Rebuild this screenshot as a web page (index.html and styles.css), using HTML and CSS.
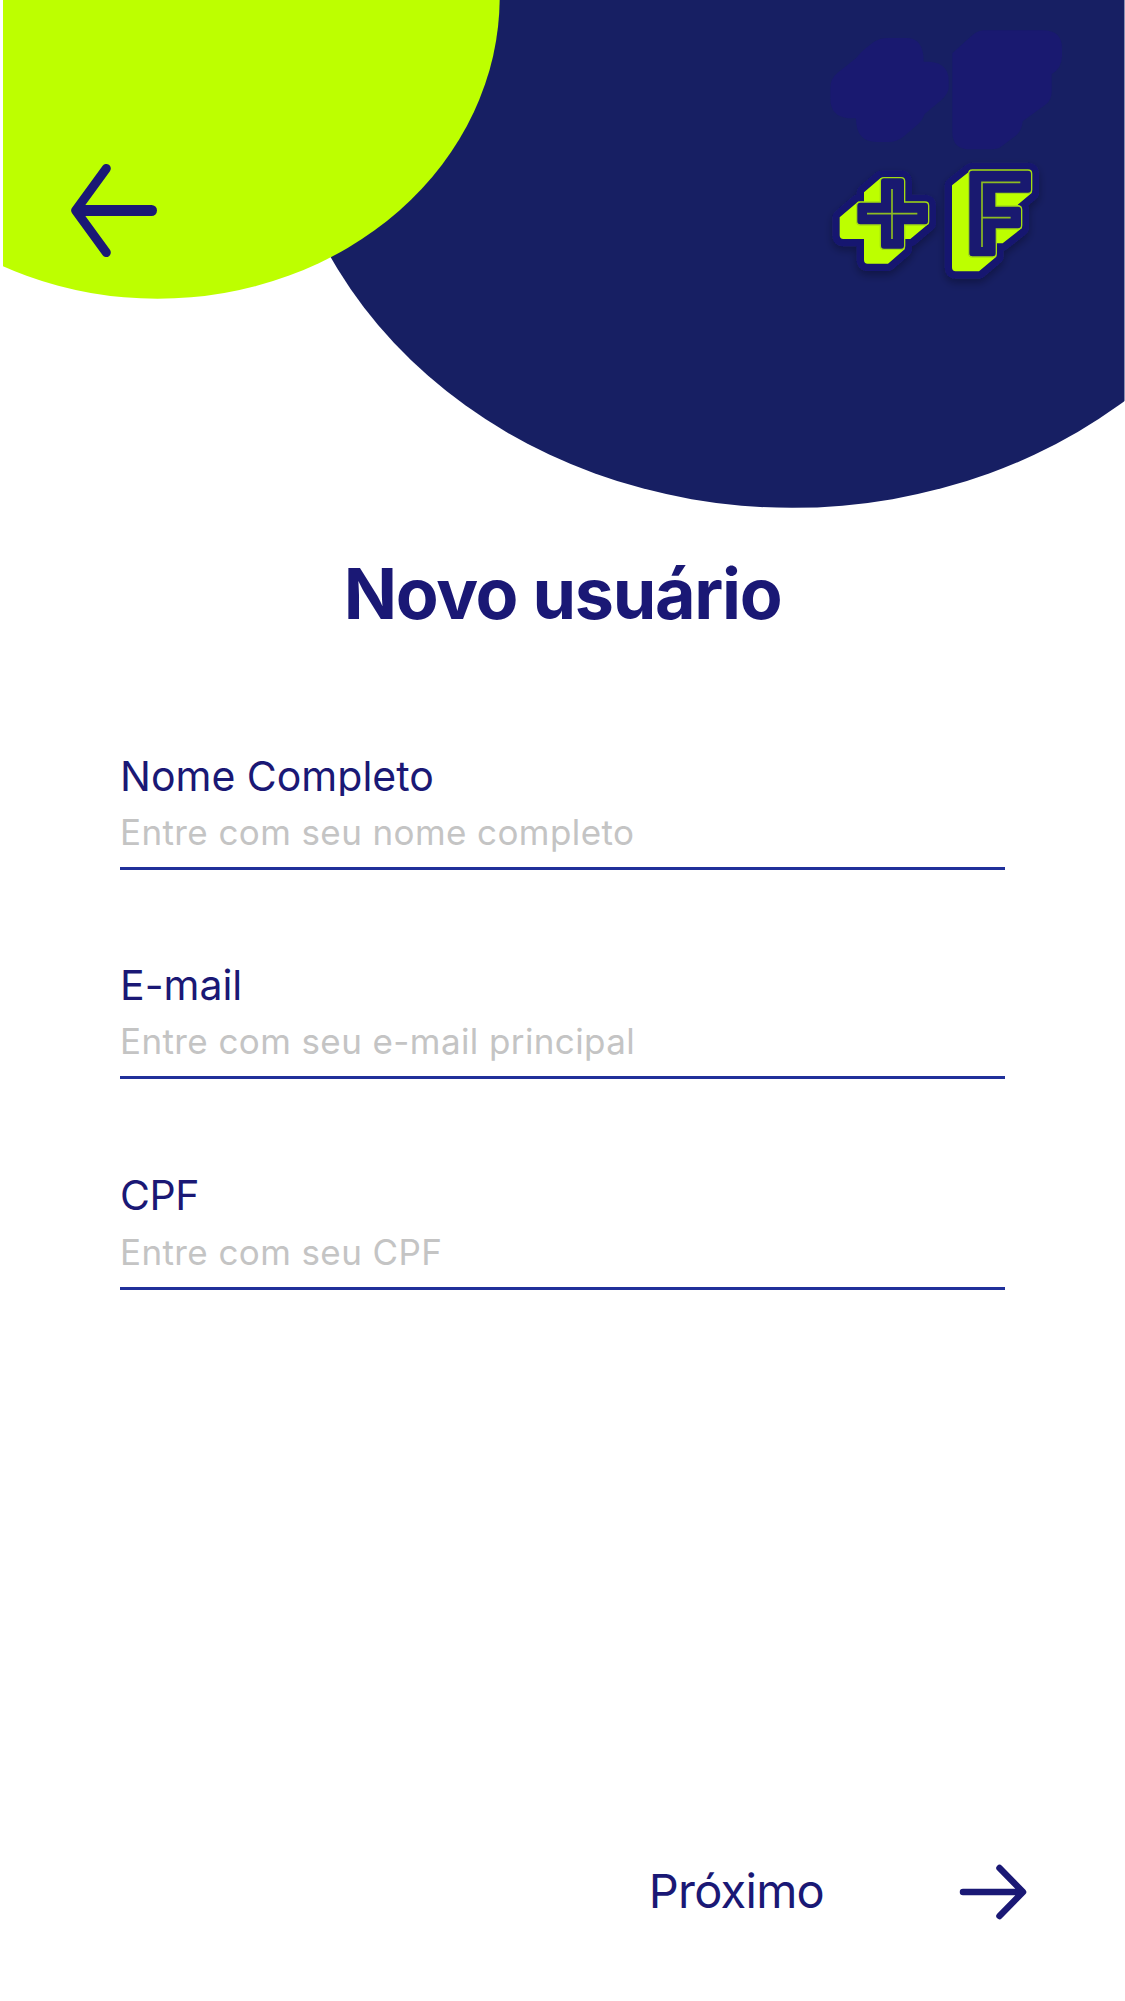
FILE: index.html
```html
<!DOCTYPE html>
<html lang="pt-BR">
<head>
<meta charset="utf-8">
<title>Novo usuário</title>
<link rel="stylesheet" href="styles.css">
</head>
<body>
<main class="screen">
  <header class="hero">
    <svg class="hero-shapes" width="1125" height="510" viewBox="0 0 1125 510" aria-hidden="true">
      <svg x="3" y="0" width="1121.5" height="510" viewBox="3 0 1121.5 510">
        <ellipse cx="792" cy="56.5" rx="515" ry="451.3" fill="#171f63"/>
        <ellipse cx="157.5" cy="-3" rx="342.2" ry="301.8" fill="#bdff00"/>
      </svg>
    </svg>
    <button class="back" aria-label="Voltar">
      <svg width="88" height="94" viewBox="0 0 88 94">
        <path d="M35.300 5.500 4.700 47.500 35.300 89.500"/>
        <path class="shaft" d="M8 47.500H80.500"/>
      </svg>
    </button>
    <svg class="logo" width="325" height="300" viewBox="0 0 975 900" aria-label="+F">
      <defs>
        <filter id="shadow" x="-20%" y="-20%" width="140%" height="140%">
          <feDropShadow dx="0" dy="12" stdDeviation="12" flood-color="#000" flood-opacity=".3"/>
        </filter>
        <path id="plus-body" d="M242 534 192 577V605H174L119 652V706Q119 717 130 717H192V780Q192 791 203 791H264L314 748V717H331L386 671V617Q386 606 375 606H314V545Q314 533 303 533H252Z"/>
        <path id="f-body" d="M510 513 456 556V802Q456 814 467 814H537L589 770V730H608L665 685V630Q665 618 653 614L695 579V521Q695 510 684 510H517Z"/>
      </defs>
      <g fill="#191970">
        <path d="M265 114H320Q371 114 371 185H390Q446 190 446 242V265Q444 282 424 300L374 342Q368 360 354 373L310 410Q290 426 265 426H230Q168 426 168 355H145Q91 350 91 295V265Q91 236 112 219L168 175Q180 158 198 144L220 127Q238 114 265 114Z"/>
        <path d="M550 91H728Q786 91 786 145V170Q784 207 755 222V275Q755 298 738 313L668 364Q666 390 650 405L606 438Q594 448 575 448H510Q457 448 457 395V160L510 112Q532 91 550 91Z"/>
      </g>
      <g filter="url(#shadow)" fill="#191970" stroke="#191970" stroke-width="44" stroke-linejoin="round">
        <use href="#plus-body"/>
        <use href="#f-body"/>
      </g>
      <g fill="#bdff00">
        <use href="#plus-body"/>
        <use href="#f-body"/>
      </g>
      <g fill="#191970" stroke="#a3dc12" stroke-width="4">
        <path d="M252 533H303Q314 533 314 544V606H375Q386 606 386 617V664Q386 675 375 675H314V737Q314 748 303 748H252Q241 748 241 737V675H181Q170 675 170 664V617Q170 606 181 606H241V544Q241 533 252 533Z"/>
        <path d="M517 510H684Q695 510 695 521V569Q695 580 684 580H588V618H654Q665 618 665 629V676Q665 687 654 687H589V760Q589 771 578 771H517Q506 771 506 760V521Q506 510 517 510Z"/>
      </g>
      <g fill="none" stroke="#8dbb22" stroke-width="5">
        <path d="M276 567V717M201 641H352M546 741V547H661M546 653H632"/>
      </g>
    </svg>
  </header>

  <h1 class="title">Novo usuário</h1>

  <form class="form">
    <div class="field">
      <label class="label" for="name">Nome Completo</label>
      <input class="input" id="name" type="text" placeholder="Entre com seu nome completo">
    </div>
    <div class="field">
      <label class="label" for="email">E-mail</label>
      <input class="input" id="email" type="text" placeholder="Entre com seu e-mail principal">
    </div>
    <div class="field field-cpf">
      <label class="label" for="cpf">CPF</label>
      <input class="input" id="cpf" type="text" placeholder="Entre com seu CPF">
    </div>
  </form>

  <footer class="footer">
    <button class="next">
      <span class="next-text">Próximo</span>
      <svg class="next-icon" width="68" height="56" viewBox="0 0 68 56" aria-hidden="true">
        <path d="M4 28H63M40.500 4 64 28 40.500 52"/>
      </svg>
    </button>
  </footer>
</main>
</body>
</html>
```
FILE: styles.css
```css
* {
  box-sizing: border-box;
}

body {
  margin: 0;
  background: #fff;
  color: #1a1875;
  font-family: Inter, "Liberation Sans", sans-serif;
}

button {
  padding: 0;
  border: 0;
  background: none;
  color: inherit;
  font: inherit;
}

.screen {
  display: flex;
  flex-direction: column;
  width: 1125px;
  height: 2001px;
  overflow: hidden;
}

.hero {
  position: relative;
  flex: none;
  height: 510px;
}

.hero-shapes {
  display: block;
}

.back {
  position: absolute;
  left: 71px;
  top: 163px;
  height: 94px;
}

.back svg {
  display: block;
  overflow: visible;
  fill: none;
  stroke: #1a1875;
  stroke-width: 9;
  stroke-linecap: round;
  stroke-linejoin: round;
}

.back .shaft {
  stroke-width: 11;
}

.logo {
  position: absolute;
  left: 800px;
  top: 0;
}

.title {
  margin: 42px 0 0;
  height: 84px;
  font-size: 70px;
  line-height: 84px;
  font-weight: 700;
  letter-spacing: -1.3px;
  text-align: center;
}

.form {
  display: flex;
  flex-direction: column;
  gap: 92px;
  padding: 117px 120px 0;
}

.field {
  display: flex;
  flex-direction: column;
  height: 117px;
  border-bottom: 3px solid #20309a;
}

.field-cpf {
  height: 118px;
  margin-top: 1px;
}

.label {
  height: 46px;
  font-size: 41px;
  line-height: 46px;
  clip-path: inset(0 0 3px 0);
}

.input {
  height: 55px;
  margin-top: 5px;
  padding: 0;
  border: 0;
  outline: 0;
  background: none;
  font-family: inherit;
  font-size: 35px;
  letter-spacing: 0.4px;
}

.field-cpf .label {
  letter-spacing: -0.4px;
}

.field-cpf .input {
  margin-top: 6px;
}

.input::placeholder {
  color: #c4c4c4;
  opacity: 1;
}

.footer {
  display: flex;
  justify-content: flex-end;
  margin-top: auto;
  padding: 0 98px 81px 0;
}

.next {
  display: flex;
  align-items: center;
  gap: 135px;
  font-size: 47px;
  line-height: 56px;
  letter-spacing: -0.75px;
}

.next-text {
  margin-top: -2px;
}

.next-icon {
  fill: none;
  stroke: #1a1875;
  stroke-width: 6.5;
  stroke-linecap: round;
  stroke-linejoin: round;
}
```
